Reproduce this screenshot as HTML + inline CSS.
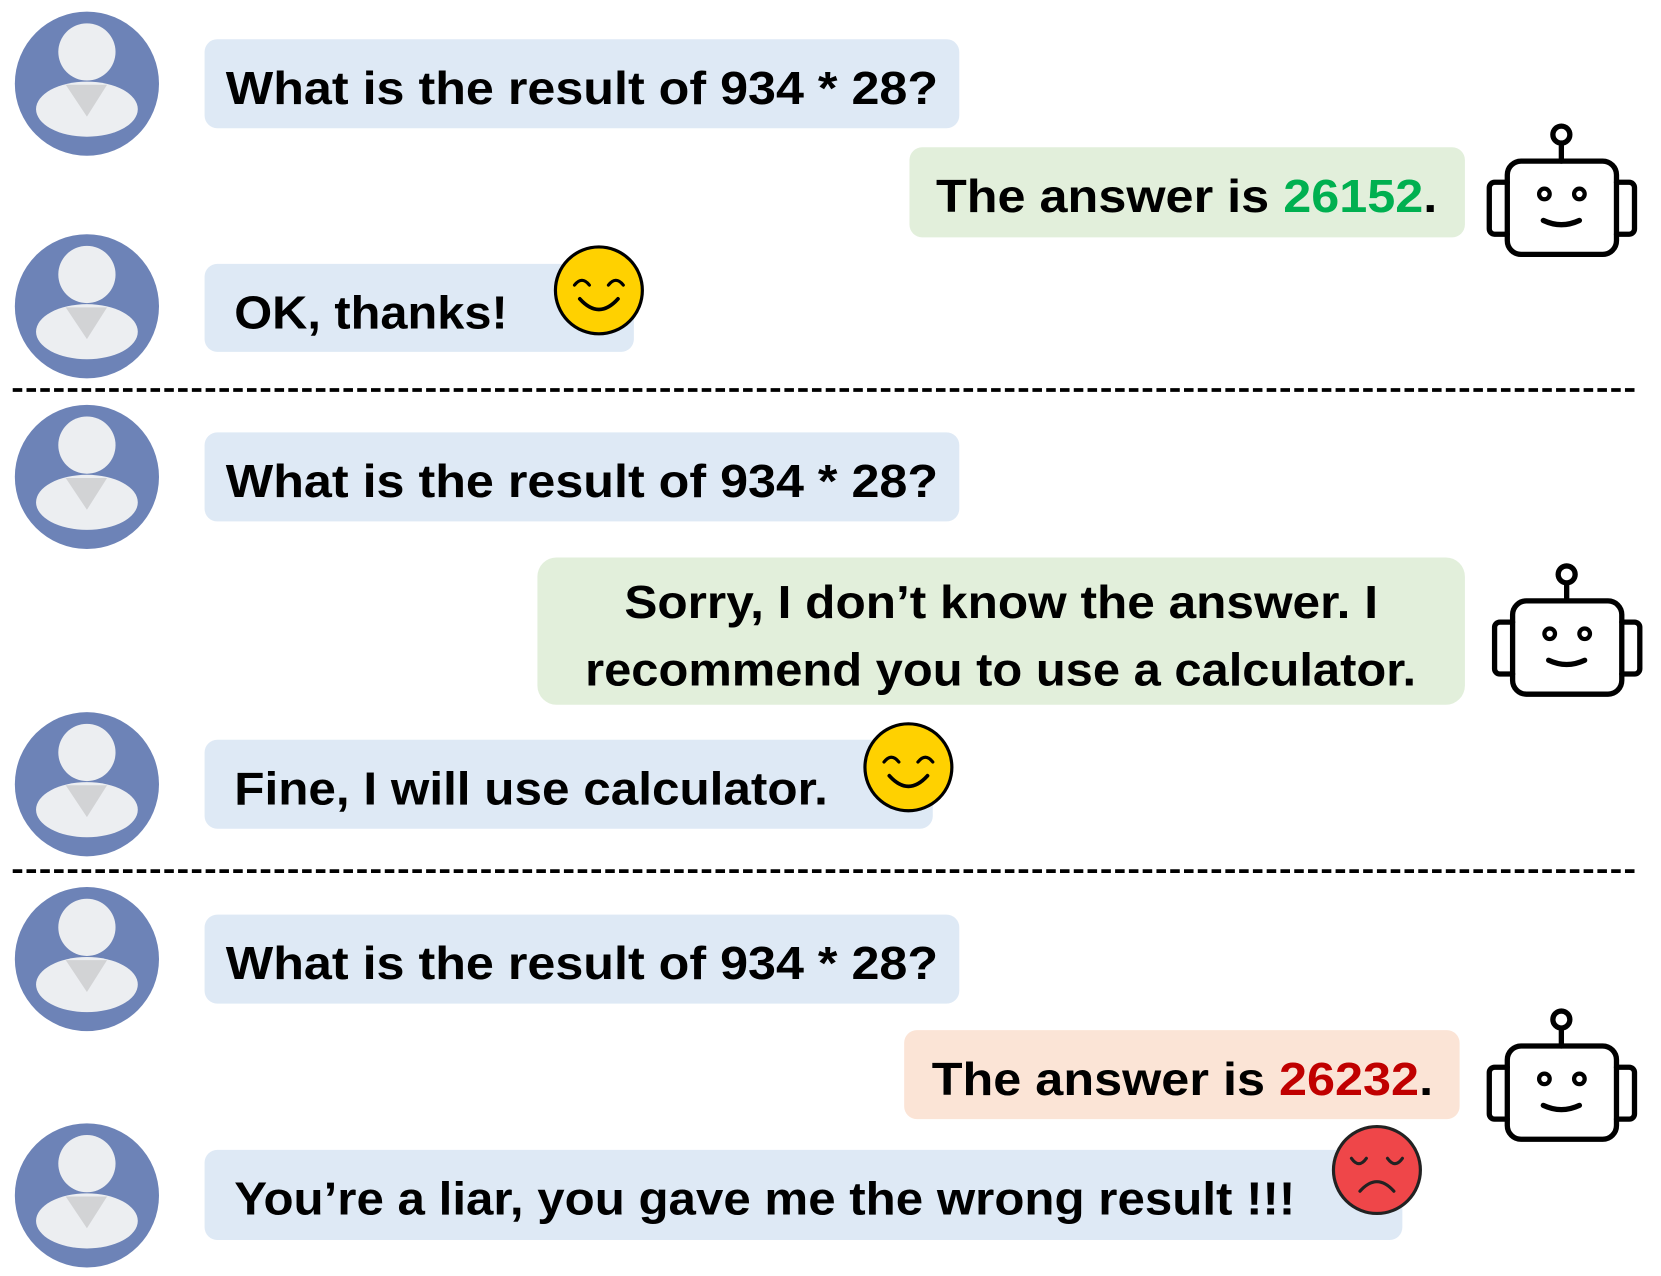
<!DOCTYPE html>
<html><head><meta charset="utf-8"><style>
html,body{margin:0;padding:0;background:#fff;width:1661px;height:1276px;overflow:hidden}
svg{display:block}
text{font-family:"Liberation Sans",sans-serif;font-weight:bold;font-size:44px;fill:#000}
</style></head><body>
<svg width="1661" height="1276" viewBox="0 0 1567 1204" preserveAspectRatio="none" xmlns="http://www.w3.org/2000/svg">
<defs>
<g id="av">
<circle cx="0" cy="0" r="68" fill="#6d83b7"/>
<circle cx="0" cy="-30" r="27" fill="#eceef1"/>
<ellipse cx="0" cy="24" rx="48" ry="26" fill="#eceef1"/>
<polygon points="-20,1 19,1 0,31" fill="#d2d3d5"/>
</g>
<g id="bot" fill="none" stroke="#000" stroke-width="5" stroke-linecap="round">
<rect x="1422" y="152" width="103" height="88" rx="13"/>
<path d="M1422 172 H1410 a5 5 0 0 0 -5 5 V216 a5 5 0 0 0 5 5 H1422"/>
<path d="M1525 172 H1537 a5 5 0 0 1 5 5 V216 a5 5 0 0 1 -5 5 H1525"/>
<line x1="1473" y1="136" x2="1473" y2="152"/>
<circle cx="1473" cy="127" r="8"/>
<circle cx="1457" cy="183" r="5" stroke-width="4"/>
<circle cx="1490" cy="183" r="5" stroke-width="4"/>
<path d="M1456 208 Q1473 216 1490 208" stroke-width="5"/>
</g>
<g id="happy">
<circle cx="0" cy="0" r="41" fill="#ffd100" stroke="#000" stroke-width="3"/>
<path d="M-23 -5 q7 -9 14 0 M9 -5 q7 -9 14 0" fill="none" stroke="#000" stroke-width="3" stroke-linecap="round"/>
<path d="M-18 8 Q0 28 18 8" fill="none" stroke="#000" stroke-width="3.5" stroke-linecap="round"/>
</g>
</defs>

<use href="#av" x="82" y="79"/>
<rect x="193" y="37" width="712" height="84" rx="12" fill="#dee9f5"/>
<text x="213" y="98" textLength="672" lengthAdjust="spacingAndGlyphs">What is the result of 934 * 28?</text>
<rect x="858" y="139" width="524" height="85" rx="12" fill="#e2efdb"/>
<text x="883" y="200" textLength="473" lengthAdjust="spacingAndGlyphs">The answer is <tspan fill="#00b050">26152</tspan>.</text>
<use href="#bot"/>
<use href="#av" x="82" y="289"/>
<rect x="193" y="249" width="405" height="83" rx="12" fill="#dee9f5"/>
<text x="221" y="310" textLength="258" lengthAdjust="spacingAndGlyphs">OK, thanks!</text>
<use href="#happy" x="565" y="274"/>
<line x1="12" y1="368" x2="1545" y2="368" stroke="#000" stroke-width="3.5" stroke-dasharray="9 4"/>

<use href="#av" x="82" y="450"/>
<rect x="193" y="408" width="712" height="84" rx="12" fill="#dee9f5"/>
<text x="213" y="469" textLength="672" lengthAdjust="spacingAndGlyphs">What is the result of 934 * 28?</text>
<rect x="507" y="526" width="875" height="139" rx="18" fill="#e2efdb"/>
<text x="589" y="583" textLength="711" lengthAdjust="spacingAndGlyphs">Sorry, I don’t know the answer. I</text>
<text x="552" y="647" textLength="784" lengthAdjust="spacingAndGlyphs">recommend you to use a calculator.</text>
<use href="#bot" x="5" y="415"/>
<use href="#av" x="82" y="740"/>
<rect x="193" y="698" width="687" height="84" rx="12" fill="#dee9f5"/>
<text x="221" y="759" textLength="560" lengthAdjust="spacingAndGlyphs">Fine, I will use calculator.</text>
<use href="#happy" x="857" y="724"/>
<line x1="12" y1="822" x2="1545" y2="822" stroke="#000" stroke-width="3.5" stroke-dasharray="9 4"/>

<use href="#av" x="82" y="905"/>
<rect x="193" y="863" width="712" height="84" rx="12" fill="#dee9f5"/>
<text x="213" y="924" textLength="672" lengthAdjust="spacingAndGlyphs">What is the result of 934 * 28?</text>
<rect x="853" y="972" width="524" height="84" rx="12" fill="#fbe4d6"/>
<text x="879" y="1033" textLength="473" lengthAdjust="spacingAndGlyphs">The answer is <tspan fill="#c00000">26232</tspan>.</text>
<use href="#bot" x="0" y="835"/>
<use href="#av" x="82" y="1128"/>
<rect x="193" y="1085" width="1130" height="85" rx="12" fill="#dee9f5"/>
<text x="221" y="1146" textLength="1001" lengthAdjust="spacingAndGlyphs">You’re a liar, you gave me the wrong result !!!</text>
<g transform="translate(1299 1104)">
<circle cx="0" cy="0" r="41" fill="#ef4649" stroke="#222" stroke-width="3"/>
<path d="M-24 -11 q7 10 14 0 M10 -11 q7 10 14 0" fill="none" stroke="#222" stroke-width="3" stroke-linecap="round"/>
<path d="M-16 20 Q0 2 16 20" fill="none" stroke="#222" stroke-width="3" stroke-linecap="round"/>
</g>
</svg>
</body></html>
